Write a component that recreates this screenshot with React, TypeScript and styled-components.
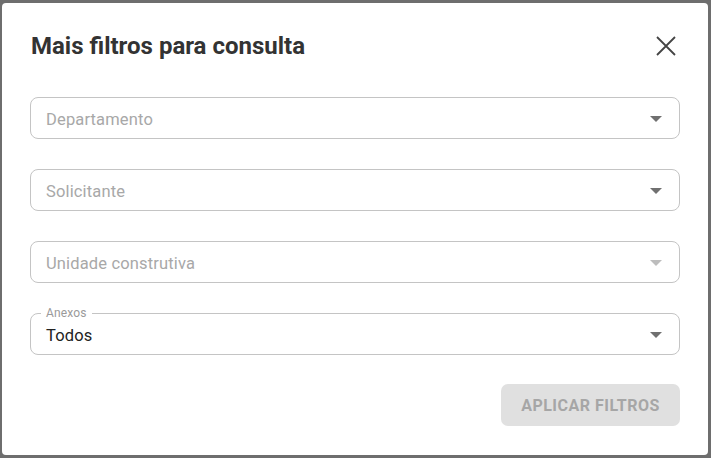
import React from "react";
import styled, { createGlobalStyle } from "styled-components";

const Global = createGlobalStyle`
  html, body { margin: 0; padding: 0; }
  body { font-family: Roboto, "Liberation Sans", sans-serif; background: #6e6e6e; }
  * { box-sizing: border-box; }
`;

const Backdrop = styled.div`
  width: 711px;
  height: 458px;
  background: #6e6e6e;
  padding: 3px 3px 3px 2px;
  display: flex;
`;

const Dialog = styled.div`
  flex: 1;
  background: #fff;
  border-radius: 4px;
  padding: 27px 28px 0 28px;
  display: flex;
  flex-direction: column;
`;

const Header = styled.div`
  flex-shrink: 0;
  display: flex;
  align-items: center;
  justify-content: space-between;
  height: 32px;
  margin-bottom: 35px;
`;

const Title = styled.h2`
  margin: 0 0 0 1px;
  font-size: 24px;
  font-weight: 700;
  color: #333;
  letter-spacing: 0;
`;

const CloseButton = styled.button`
  border: 0;
  background: none;
  padding: 0;
  width: 24px;
  height: 24px;
  margin-right: 2px;
  display: flex;
  align-items: center;
  justify-content: center;
  cursor: pointer;
`;

const Fields = styled.div`
  display: flex;
  flex-direction: column;
  gap: 30px;
`;

const Field = styled.div`
  position: relative;
  flex-shrink: 0;
  height: 42px;
  border: 1px solid #c4c4c4;
  border-radius: 8px;
  display: flex;
  align-items: center;
  padding: 0 17px 0 15px;
`;

const Value = styled.span<{ $placeholder?: boolean }>`
  flex: 1;
  font-size: 16.5px;
  letter-spacing: 0.15px;
  color: ${(p) => (p.$placeholder ? "#a8a8a8" : "#222")};
  padding-top: 2px;
`;

const Legend = styled.span`
  position: absolute;
  top: -8px;
  left: 10px;
  padding: 0 5px;
  background: #fff;
  font-size: 12px;
  letter-spacing: 0.15px;
  color: #9a9a9a;
  line-height: 14px;
`;

const Arrow = styled.span<{ $disabled?: boolean }>`
  width: 0;
  height: 0;
  border-left: 6px solid transparent;
  border-right: 6px solid transparent;
  border-top: 6px solid ${(p) => (p.$disabled ? "#bdbdbd" : "#707070")};
  margin-top: 1px;
`;

const Footer = styled.div`
  display: flex;
  justify-content: flex-end;
  margin-top: 29px;
`;

const ApplyButton = styled.button`
  width: 179px;
  height: 42px;
  border: 0;
  border-radius: 7px;
  background: #e0e0e0;
  color: #a6a6a6;
  font-family: Roboto, "Liberation Sans", sans-serif;
  font-size: 16px;
  font-weight: 700;
  letter-spacing: 0.5px;
  text-transform: uppercase;
`;

type F = { label: string; value?: string; disabled?: boolean };

const fields: F[] = [
  { label: "Departamento" },
  { label: "Solicitante" },
  { label: "Unidade construtiva", disabled: true },
  { label: "Anexos", value: "Todos" },
];

export default function App() {
  return (
    <>
      <Global />
      <Backdrop>
        <Dialog>
          <Header>
            <Title>Mais filtros para consulta</Title>
            <CloseButton aria-label="Fechar">
              <svg width="22" height="22" viewBox="0 0 22 22">
                <path d="M2 2 L20 20 M20 2 L2 20" stroke="#444" strokeWidth="1.8" fill="none" />
              </svg>
            </CloseButton>
          </Header>
          <Fields>
            {fields.map((f) => (
              <Field key={f.label}>
                {f.value && <Legend>{f.label}</Legend>}
                <Value $placeholder={!f.value}>{f.value ?? f.label}</Value>
                <Arrow $disabled={f.disabled} />
              </Field>
            ))}
          </Fields>
          <Footer>
            <ApplyButton disabled>Aplicar filtros</ApplyButton>
          </Footer>
        </Dialog>
      </Backdrop>
    </>
  );
}
